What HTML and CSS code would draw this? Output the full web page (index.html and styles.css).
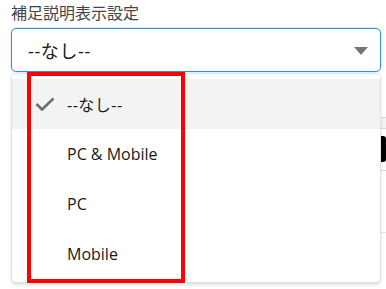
FILE: index.html
```html
<!DOCTYPE html>
<html lang="ja">
  <head>
    <meta charset="UTF-8" />
    <meta name="viewport" content="width=device-width, initial-scale=1.0" />
    <title>補足説明表示設定</title>
    <link rel="stylesheet" href="styles.css">
  </head>
  <body>
    <div class="field">
      <label class="field-label">補足説明表示設定</label>
      <div class="combobox">
        <div class="select">
          <span class="select-value">--なし--</span>
          <svg class="select-arrow" width="14" height="8" viewBox="0 0 14 8">
            <path d="M0 0 H14 L7 8 Z" fill="#747474" />
          </svg>
        </div>

        <!-- page content underneath the open menu -->
        <div class="behind">
          <div class="behind-bar"></div>
          <div class="behind-action"><span class="behind-button"></span></div>
          <div class="behind-line"></div>
        </div>

        <ul class="listbox">
          <li class="option selected">
            <svg class="check" width="20" height="14" viewBox="0 0 20 14">
              <path d="M1.5 7 L7 12.5 L18.5 1.5" fill="none" stroke="#706e6b" stroke-width="2.6" />
            </svg>
            <span class="jp">--なし--</span>
          </li>
          <li class="option"><span>PC &amp; Mobile</span></li>
          <li class="option"><span>PC</span></li>
          <li class="option"><span>Mobile</span></li>
        </ul>

        <div class="mark"></div>
      </div>
    </div>
  </body>
</html>
```

FILE: styles.css
```css
html,
body {
  min-height: 100vh;
}

body {
  margin: 0;
  font-family: "Open Sans", "Noto Sans CJK JP", sans-serif;
  color: #181818;
  background-color: #ffffff;
  overflow: hidden;
}

.field {
  padding: 3px 5px 0 11px;
}

.field-label {
  display: block;
  font-size: 16px;
  line-height: 20px;
  color: #444444;
  margin-bottom: 5px;
}

.combobox {
  position: relative;
}

.select {
  height: 42px;
  display: flex;
  align-items: center;
  justify-content: space-between;
  padding: 0 12px 0 16px;
  border: 1px solid #2f8de4;
  border-radius: 5px;
  box-shadow: 0 0 2px #9cc8f2;
}

.select-value {
  font-size: 18px;
  letter-spacing: 0.6px;
}

.select-arrow {
  display: block;
  margin-top: 2px;
}

.behind {
  margin-top: 45px;
  margin-right: -5px;
  height: 170px;
}

.behind-bar {
  height: 10px;
  background-color: #f3f3f3;
  border-top: 1px solid #d8d8d8;
  border-bottom: 1px solid #d8d8d8;
}

.behind-action {
  display: flex;
  justify-content: flex-end;
  padding: 7px 0 8px;
}

.behind-button {
  width: 40px;
  height: 26px;
  background-color: #000000;
  border-radius: 3px;
}

.behind-line {
  border-top: 1px solid #d8d8d8;
  height: 61px;
  border-bottom: 1px solid #e5e5e5;
}

.listbox {
  position: absolute;
  top: 45px;
  left: 0;
  right: 0;
  margin: 0;
  padding: 5px 0 3px;
  list-style-type: none;
  background-color: #ffffff;
  border: 1px solid #e3e3e3;
  border-radius: 5px;
  box-shadow: 0 2px 3px rgba(0, 0, 0, 0.12);
}

.option {
  height: 50px;
  display: flex;
  align-items: center;
  padding-left: 55px;
  position: relative;
  font-size: 16px;
}

.option.selected {
  background-color: #f3f3f3;
}

.jp {
  letter-spacing: 0.5px;
}

.check {
  position: absolute;
  left: 23px;
  top: 18px;
}

.mark {
  position: absolute;
  left: 16px;
  top: 44px;
  width: 150px;
  height: 203px;
  border: 4px solid #ff0000;
}
```
